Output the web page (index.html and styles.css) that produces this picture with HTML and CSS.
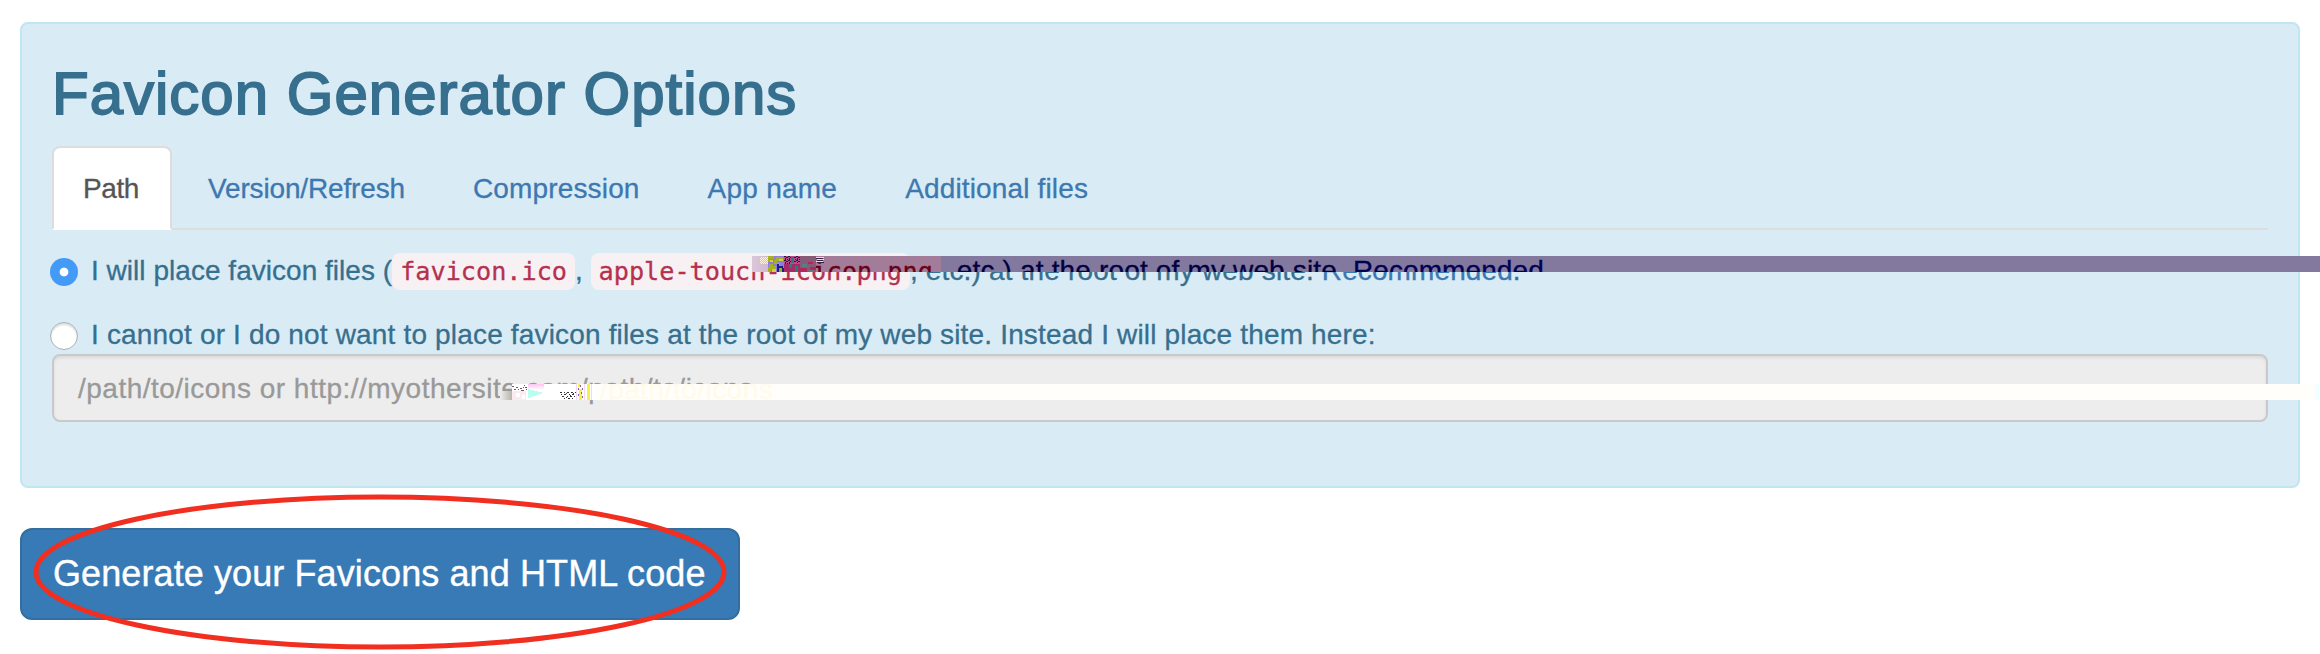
FILE: index.html
```
<!DOCTYPE html>
<html lang="en">
<head>
<meta charset="utf-8">
<title>Favicon Generator Options</title>
<link rel="stylesheet" href="styles.css">
</head>
<body>
<main class="page">
  <section class="alert">
    <h2 class="title">Favicon Generator Options</h2>
    <nav class="tabs">
      <a class="tab active">Path</a>
      <a class="tab version">Version/Refresh</a>
      <a class="tab">Compression</a>
      <a class="tab app">App name</a>
      <a class="tab">Additional files</a>
    </nav>
    <div class="option">
      <span class="radio checked"></span>
      <p class="line"><span>I will place favicon files (</span><code>favicon.ico</code><span>, </span><code>apple-touch-icon.png</code><span class="rest">, etc.) at the root of my web site. <a>Recommended</a>.</span></p>
    </div>
    <div class="option second">
      <span class="radio"></span>
      <p class="line wide">I cannot or I do not want to place favicon files at the root of my web site. Instead I will place them here:</p>
    </div>
    <div class="field">/path/to/icons or http://myothersite.com/path/to/icons</div>
  </section>
  <button class="generate">Generate your Favicons and HTML code</button>
</main>

<!-- displaced strip across the first option -->
<div class="strip purple" aria-hidden="true">
  <p class="line"><code>h-icon.png</code><span class="rest">, etc.) at the root of my web site. <a>Recommended</a></span></p>
  <svg class="noise" width="80" height="16" viewBox="0 0 80 16" shape-rendering="crispEdges">
    <defs>
      <pattern id="dots" width="2" height="2" patternUnits="userSpaceOnUse"><path fill="#fff5dc" d="M0 0h1v1H0zM1 1h1v1H1z"/></pattern>
      <pattern id="darkdots" width="4" height="4" patternUnits="userSpaceOnUse"><path fill="#102820" d="M0 0h2v1H0zM2 1h2v1H2zM1 2h1v2H1zM3 3h1v1H3z"/></pattern>
      <linearGradient id="fade"><stop offset="0" stop-color="#dcc6da"/><stop offset="1" stop-color="#ccb4cc"/></linearGradient>
    </defs>
    <path fill="url(#fade)" d="M0 0h24v16H0z"/>
    <path fill="url(#dots)" d="M8 1h8v7H8z"/>
    <path fill="#8f7be6" d="M16 0h16v16H16z"/>
    <path fill="#a8b020" d="M16 0h6v3h-4v3h-2zM24 1h7v2h-3v2h-4zM17 8h4v2h3v3h-5v3h-3v-5h1zM22 4h3v3h3v3h-3v-2h-3zM28 12h4v4h-4z"/>
    <path fill="#d0d040" d="M18 4h3v2h-3zM27 3h4v2h-4zM20 13h4v3h-4z"/>
    <path fill="#182080" d="M25 8h2v8h-2zM27 10h4v2h-4zM30 12h2v4h-2z"/>
    <path fill="#c04894" d="M32 0h16v8H32z"/>
    <path fill="url(#darkdots)" d="M32 0h7v8h-7zM42 0h6v7h-6z"/>
    <path fill="#a52a68" d="M32 8h16v8H32z"/>
    <path fill="#287c70" d="M39 1h3v6h-3zM37 8h3v4h-3zM43 10h3v6h-3z"/>
    <path fill="#875a78" d="M48 0h16v16H48z"/>
    <path fill="#b02858" d="M56 6h5v2h-5zM48 12h7v4h-7zM58 11h6v3h-6z"/>
    <path fill="#548084" d="M50 8h5v3h-5zM57 14h5v2h-5z"/>
    <path fill="#eadcea" d="M64 1h8v1h-8zM65 3h7v1h-7zM64 5h7v1h-7z"/>
    <path fill="#382040" d="M64 2h7v1h-7zM65 4h6v1h-6zM65 6h7v1h-7z"/>
  </svg>
</div>

<!-- displaced strip across the path field -->
<div class="strip white" aria-hidden="true">
  <p class="ghost">/path/to/icons</p>
  <svg class="noise" width="96" height="16" viewBox="0 0 96 16" shape-rendering="crispEdges">
    <defs>
      <linearGradient id="pink" x2="0" y2="1"><stop offset="0" stop-color="#fcc4f2"/><stop offset="1" stop-color="#fff"/></linearGradient>
      <linearGradient id="grey"><stop offset="0" stop-color="#eee"/><stop offset="1" stop-color="#b8b4a8"/></linearGradient>
    </defs>
    <path fill="#fff" d="M12 0h84v16H12z"/>
    <path fill="url(#grey)" d="M0 7h12v9H0z"/>
    <path fill="#fbeaf0" d="M12 7h14v9H12z"/>
    <path fill="#fff" d="M16 9h4v4h-4zM22 11h3v4h-3z"/>
    <path fill="#735868" d="M12 2h2v1h-2zM14 5h2v1h-2zM16 3h2v1h-2zM18 5h1v1h-1zM20 4h2v1h-2zM21 6h3v1h-3zM24 1h1v1h-1zM25 3h2v1h-2zM23 3h1v1h-1zM26 5h1v1h-1z"/>
    <path fill="url(#pink)" d="M28 0h16v6H28z"/>
    <path fill="#b8fff0" d="M28 5l16 4-16 5z"/>
    <path fill="#333" d="M60 8h2v1h-2zM64 8h1v1h-1zM67 8h2v1h-2zM71 8h2v1h-2zM75 8h1v1h-1zM61 10h1v1h-1zM64 10h2v1h-2zM69 10h1v1h-1zM72 10h2v1h-2zM62 12h2v1h-2zM67 12h1v1h-1zM70 12h2v1h-2zM74 12h1v1h-1zM64 14h1v1h-1zM68 14h2v1h-2zM72 14h1v1h-1zM66 9h1v1h-1zM70 11h1v1h-1zM66 13h1v1h-1zM73 9h1v1h-1z"/>
    <path fill="#f5f04a" d="M78 0h2v3h-2zM79 5h3v11h-3zM87 0h3v16h-3z"/>
    <path fill="#8e60a0" d="M80 1h1v2h-1zM78 4h1v2h-1zM82 4h1v2h-1zM81 8h1v2h-1zM78 10h1v2h-1zM82 12h1v2h-1z"/>
    <path fill="#f0d8fa" d="M76 0h1v16h-1zM84 0h1v16h-1zM91 0h1v16h-1z"/>
  </svg>
</div>

<!-- hand-drawn highlight round the button -->
<svg class="ring" width="700" height="160" viewBox="0 0 700 160"><ellipse cx="350" cy="80" rx="344" ry="75" fill="none" stroke="#f12f20" stroke-width="5"/></svg>
</body>
</html>
```
FILE: styles.css
```
* { box-sizing: border-box; }
body { position: relative; margin: 0; height: 654px; overflow: hidden; background: #fff; font: 28px/40px "Liberation Sans", Arial, sans-serif; }
.page { padding: 22px 20px 0; }
.alert { height: 466px; padding: 30px; border: 2px solid #bfe7ef; border-radius: 8px; background: #d9ebf5; color: #376f8e; }
.title { margin: 7px 0 19px; font-size: 60px; line-height: 66px; font-weight: 400; letter-spacing: 1px; -webkit-text-stroke: 1.8px currentColor; }
.tabs { display: flex; gap: 4px; height: 84px; border-bottom: 2px solid #ddd; }
.tab { height: 84px; padding: 21px 30px 19px; border: 2px solid transparent; color: #3d78b0; letter-spacing: .15px; -webkit-text-stroke: .3px currentColor; }
.tab.version { letter-spacing: -.15px; }
.tab.app { letter-spacing: .24px; }
.tab.active { padding-left: 29px; padding-right: 31px; letter-spacing: -.4px; color: #555; background: #fff; border-color: #ddd #ddd transparent; border-radius: 8px 8px 0 0; }
.option { display: flex; gap: 13px; height: 40px; margin: 21px 0 0 -2px; }
.option.second { margin-top: 23px; }
.radio { flex: none; width: 28px; height: 28px; margin-top: 8px; border-radius: 50%; background: #fff; border: 1px solid #a8b0b6; box-shadow: inset 0 2px 2px #ddd; }
.radio.checked { margin-top: 7px; border: 0; box-shadow: none; background: radial-gradient(circle, #fff 0 4px, #439bf7 4.8px); }
.line { margin: 0; white-space: pre; letter-spacing: .03px; -webkit-text-stroke: .3px currentColor; }
.line.wide { padding-top: 1px; letter-spacing: .165px; }
.rest { letter-spacing: .16px; }
.rest a { color: #3d78b0; letter-spacing: .1px; }
code { font: 25.2px "DejaVu Sans Mono", Menlo, monospace; letter-spacing: 0; color: #b5314f; background: #f8f1f4; padding: 4px 8px; border-radius: 8px; }
.field { height: 68px; padding: 13px 24px 11px; border: 2px solid #c9c9cb; background: #ededed; box-shadow: inset 0 2px 3px rgba(0, 0, 0, .08); color: #999; border-radius: 8px; letter-spacing: .49px; -webkit-text-stroke: .3px currentColor; }
.generate { display: block; margin-top: 40px; height: 92px; width: 720px; padding: 20px 0 20px 31px; text-align: left; font: 36px/48px "Liberation Sans", Arial, sans-serif; letter-spacing: .1px; color: #fff; background: #377ab5; border: 2px solid #346e9f; border-radius: 12px; -webkit-text-stroke: .4px currentColor; }
.strip { position: absolute; height: 16px; overflow: hidden; }
.strip p { width: max-content; white-space: pre; }
.noise { position: absolute; left: 0; top: 0; }
.purple { left: 752px; top: 256px; width: 1568px; background: #83799e; color: #000042; }
.purple .line { margin: -5px 0 0 29.3px; }
.purple code { padding-left: 0; color: #6a0014; background: #a37c9a; border-radius: 0; }
.purple .rest a { color: #000055; }
.white { left: 500px; top: 384px; width: 1820px; background: linear-gradient(90deg, transparent 12px, #fffefa 12px 1815px, #f0ffff 1815px); }
.white .ghost { margin: -14px 0 0 100px; color: #fffbea; letter-spacing: .48px; }
.ring { position: absolute; left: 30px; top: 492px; }
```
